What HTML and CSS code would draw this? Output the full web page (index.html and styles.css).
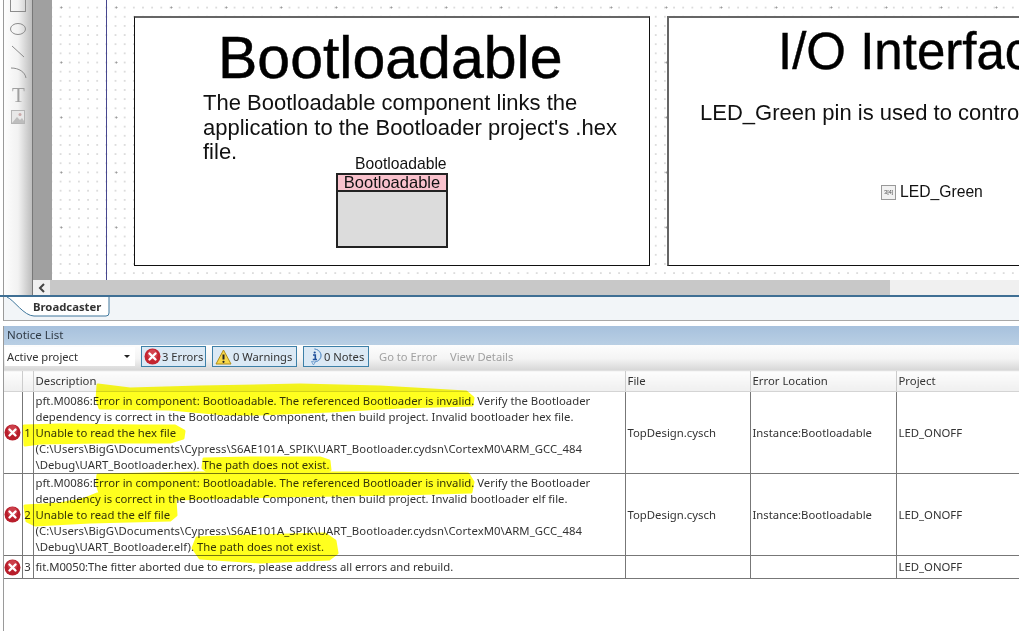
FILE: index.html
```html
<!DOCTYPE html>
<html lang="en">
<head>
<meta charset="utf-8">
<title>Notice List</title>
<link rel="stylesheet" href="styles.css">
</head>
<body>
<div class="app">
  <section class="workspace">
    <aside class="toolrail">
      <svg class="tool-icons" width="28" height="126" viewBox="0 0 28 126">
        <rect x="7.5" y="-3.5" width="15" height="15" class="tool-line"/>
        <ellipse cx="15" cy="29" rx="7.5" ry="5.5" class="tool-line"/>
        <path d="M9 46 L21 57" class="tool-line"/>
        <path d="M8 68 C16 68 22 72 23 78" class="tool-line"/>
        <rect x="8.500" y="110.500" width="13" height="13" fill="#e8e8e8" stroke="#b5b5b5"/>
        <path d="M9 123 L14 117 L17 120 L19 118 L21 121 V123 Z" fill="#bdbdbd"/>
        <circle cx="17" cy="114.500" r="1.500" fill="#c9a9a9"/>
      </svg>
      <span class="tool-text">T</span>
    </aside>
    <div class="design">
      <div class="sheet-row">
        <div class="gutter"></div>
        <div class="canvas">
          <div class="page-line"></div>
          <div class="frame frame-boot">
            <h1 class="boot-title">Bootloadable</h1>
            <p class="boot-copy">The Bootloadable component links the<br>application to the Bootloader project's .hex<br>file.</p>
            <div class="symbol-label">Bootloadable</div>
            <div class="symbol">
              <div class="symbol-head">Bootloadable</div>
            </div>
          </div>
          <div class="frame frame-io">
            <h1 class="io-title">I/O Interface</h1>
            <p class="io-copy">LED_Green pin is used to control the LED</p>
            <div class="pin"><span class="pin-box">3[4]</span><span>LED_Green</span></div>
          </div>
        </div>
      </div>
      <div class="hscroll">
        <div class="hscroll-arrow">
          <svg width="8" height="10" viewBox="0 0 8 10"><path d="M6 1 L2 5 L6 9" fill="none" stroke="#444" stroke-width="2"/></svg>
        </div>
        <div class="hscroll-thumb"></div>
      </div>
    </div>
  </section>

  <nav class="tabstrip">
    <div class="tab">
      <svg class="tab-shape" width="106" height="24" viewBox="0 0 106 24">
        <path d="M1 0 C8 3 18 19 28 19 H100 Q103 19 103 16 V0" fill="#fff" stroke="#3f779c"/>
      </svg>
      <span class="tab-label">Broadcaster</span>
    </div>
  </nav>

  <section class="notices">
    <header class="notice-title">Notice List</header>
    <div class="notice-tools">
      <div class="combo"><span>Active project</span><span class="combo-arrow"></span></div>
      <div class="tool-btn btn-errors">
        <svg class="ico" width="17" height="17" viewBox="0 0 17 17"><circle cx="8.500" cy="8.500" r="8" fill="#c4242f"/><circle cx="8.500" cy="6.500" r="5" fill="#e0606a" opacity=".55"/><path d="M5.500 5.500 L11.500 11.500 M11.500 5.500 L5.500 11.500" stroke="#fff" stroke-width="2.400" stroke-linecap="round"/></svg>
        <span>3 Errors</span>
      </div>
      <div class="tool-btn btn-warnings">
        <svg class="ico" width="17" height="16" viewBox="0 0 17 16"><path d="M8.500 1 L16 15 H1 Z" fill="#f7d84a" stroke="#b08d1a" stroke-linejoin="round"/><path d="M8.500 5.500 V10.500" stroke="#222" stroke-width="2"/><circle cx="8.500" cy="12.800" r="1.100" fill="#222"/></svg>
        <span>0 Warnings</span>
      </div>
      <div class="tool-btn btn-notes">
        <svg class="ico" width="17" height="18" viewBox="0 0 17 18"><path d="M8.500 1 A7 6.500 0 1 1 5.500 13.500 L7.500 17 L9 13.900 A7 6.500 0 0 0 8.500 1 Z" fill="#fff" stroke="#6f9fd0"/><path d="M7 7 H9.300 V11.500 M6.800 11.500 H11" fill="none" stroke="#1f4f9a" stroke-width="1.600"/><circle cx="8.700" cy="4.500" r="1.100" fill="#1f4f9a"/></svg>
        <span>0 Notes</span>
      </div>
      <span class="tool-link link-goto">Go to Error</span>
      <span class="tool-link link-view">View Details</span>
    </div>
    <table class="grid">
      <colgroup>
        <col class="col-icon"><col class="col-num"><col class="col-desc"><col class="col-file"><col class="col-loc"><col class="col-proj">
      </colgroup>
      <thead>
        <tr class="grid-head"><th></th><th></th><th>Description</th><th>File</th><th>Error Location</th><th>Project</th></tr>
      </thead>
      <tbody>
        <tr class="row-tall">
          <td class="cell-icon"><svg width="17" height="17" viewBox="0 0 17 17"><circle cx="8.500" cy="8.500" r="8" fill="#b81e2b"/><circle cx="8.500" cy="6" r="5" fill="#e0606a" opacity=".5"/><path d="M5.500 5.500 L11.500 11.500 M11.500 5.500 L5.500 11.500" stroke="#fff" stroke-width="2.400" stroke-linecap="round"/></svg></td>
          <td class="cell-num">1</td>
          <td>pft.M0086:Error in component: Bootloadable. The referenced Bootloader is invalid. Verify the Bootloader<br>dependency is correct in the Bootloadable Component, then build project. Invalid bootloader hex file.<br>Unable to read the hex file<br><span class="path-line">(C:\Users\BigG\Documents\Cypress\S6AE101A_SPIK\UART_Bootloader.cydsn\CortexM0\ARM_GCC_484</span><br>\Debug\UART_Bootloader.hex). The path does not exist.</td>
          <td>TopDesign.cysch</td>
          <td>Instance:Bootloadable</td>
          <td>LED_ONOFF</td>
        </tr>
        <tr class="row-tall">
          <td class="cell-icon"><svg width="17" height="17" viewBox="0 0 17 17"><circle cx="8.500" cy="8.500" r="8" fill="#b81e2b"/><circle cx="8.500" cy="6" r="5" fill="#e0606a" opacity=".5"/><path d="M5.500 5.500 L11.500 11.500 M11.500 5.500 L5.500 11.500" stroke="#fff" stroke-width="2.400" stroke-linecap="round"/></svg></td>
          <td class="cell-num">2</td>
          <td>pft.M0086:Error in component: Bootloadable. The referenced Bootloader is invalid. Verify the Bootloader<br>dependency is correct in the Bootloadable Component, then build project. Invalid bootloader elf file.<br>Unable to read the elf file<br><span class="path-line">(C:\Users\BigG\Documents\Cypress\S6AE101A_SPIK\UART_Bootloader.cydsn\CortexM0\ARM_GCC_484</span><br>\Debug\UART_Bootloader.elf). The path does not exist.</td>
          <td>TopDesign.cysch</td>
          <td>Instance:Bootloadable</td>
          <td>LED_ONOFF</td>
        </tr>
        <tr class="row-short">
          <td class="cell-icon"><svg width="17" height="17" viewBox="0 0 17 17"><circle cx="8.500" cy="8.500" r="8" fill="#b81e2b"/><circle cx="8.500" cy="6" r="5" fill="#e0606a" opacity=".5"/><path d="M5.500 5.500 L11.500 11.500 M11.500 5.500 L5.500 11.500" stroke="#fff" stroke-width="2.400" stroke-linecap="round"/></svg></td>
          <td class="cell-num">3</td>
          <td class="fit-line">fit.M0050:The fitter aborted due to errors, please address all errors and rebuild.</td>
          <td></td>
          <td></td>
          <td>LED_ONOFF</td>
        </tr>
      </tbody>
    </table>
  </section>

  <svg class="marker" width="1019" height="631" viewBox="0 0 1019 631">
    <path d="M98 385 L130 389 L200 387 L300 385 L380 387 L466 392 L473 398 L472 405 L400 407 L330 411 L260 414 L225 414 L170 409 L100 408 L97 400 Z"/>
    <path d="M24 426 L60 425 L140 426 L175 426 L184 431 L183 438 L170 442 L100 442 L40 443 L25 445 Z"/>
    <path d="M204 459 L250 458 L320 458 L329 461 L330 470 L320 473 L210 473 L203 468 Z"/>
    <path d="M98 475 L200 473 L350 473 L468 474 L473 482 L471 492 L400 494 L280 496 L175 499 L176 515 L170 520 L90 522 L35 525 L27 521 L25 506 L60 504 L85 499 L100 493 L97 484 Z"/>
    <path d="M197 538 L250 536 L325 534 L335 541 L337 553 L329 559 L260 562 L200 558 L193 548 Z"/>
  </svg>
</div>
</body>
</html>
```
FILE: styles.css
```css
* { box-sizing: border-box; }
html, body { margin: 0; padding: 0; background: #fff; }
.app {
  position: relative;
  width: 1019px;
  height: 631px;
  overflow: hidden;
  font-family: "Noto Sans", "Open Sans", sans-serif;
  font-size: 11px;
  color: #333;
  background: #fff;
}

/* designer area */
.workspace {
  display: flex;
  height: 297px;
  padding-left: 3px;
  background: #fff;
  border-bottom: 2px solid #3f6f94;
}
.toolrail {
  position: relative;
  width: 30px;
  flex: none;
  border-left: 1px solid #9a9a9a;
  border-right: 1px solid #777;
  background: linear-gradient(to right, #fdfdfd 0%, #f2f2f2 50%, #bdbdbd 100%);
}
.tool-icons { position: absolute; left: -1px; top: 0; }
.tool-line { fill: none; stroke: #8c8c8c; stroke-width: 1; }
.tool-text {
  position: absolute;
  left: 8px;
  top: 84px;
  font-family: "Liberation Serif", serif;
  font-size: 21px;
  line-height: 22px;
  color: #a0a0a0;
}
.design { flex: 1; min-width: 0; display: flex; flex-direction: column; }
.sheet-row { display: flex; height: 280px; }
.gutter { width: 19px; flex: none; background: #a0a0a0; }
.canvas {
  position: relative;
  flex: 1;
  overflow: hidden;
  background-color: #fff;
  background-image:
    radial-gradient(circle, #9a9a9a 0.8px, transparent 1.2px),
    radial-gradient(circle, #dcdcdc 0.7px, transparent 1px);
  background-size: 55px 55px, 9.170px 9.170px;
  background-position: -18px -20px, 4px 3px;
}
.page-line {
  position: absolute;
  left: 54px;
  top: 0;
  bottom: 0;
  width: 1px;
  background: #47478f;
}
.frame {
  position: absolute;
  top: 16px;
  height: 250px;
  background: #fff;
  border: 1px solid #111;
  border-top: 2px solid #666;
  color: #000;
  font-family: "Liberation Sans", Arial, sans-serif;
}
.frame-boot { left: 82px; width: 516px; }
.frame-io { left: 615px; width: 520px; border-left: 2px solid #666; }
.boot-title {
  position: absolute;
  left: 83px;
  top: 7px;
  margin: 0;
  font-size: 59px;
  line-height: 66px;
  font-weight: 400;
  -webkit-text-stroke: 0.5px #000;
}
.boot-copy {
  position: absolute;
  left: 68px;
  top: 73px;
  margin: 0;
  font-size: 22px;
  line-height: 24.500px;
  white-space: nowrap;
  color: #111;
}
.symbol-label {
  position: absolute;
  left: 220px;
  top: 137px;
  font-size: 15.700px;
  line-height: 18px;
  white-space: nowrap;
  color: #111;
}
.symbol {
  position: absolute;
  left: 201px;
  top: 155px;
  width: 112px;
  height: 75px;
  background: #dcdcdc;
  border: 2px solid #222;
}
.symbol-head {
  height: 17px;
  background: #f9c2cd;
  border-bottom: 2px solid #222;
  text-align: center;
  font-size: 16.500px;
  line-height: 15px;
  white-space: nowrap;
  color: #111;
}
.io-title {
  position: absolute;
  left: 109px;
  top: 6px;
  margin: 0;
  font-size: 51px;
  line-height: 56px;
  font-weight: 400;
  white-space: nowrap;
  -webkit-text-stroke: 0.4px #000;
}
.io-copy {
  position: absolute;
  left: 31px;
  top: 82px;
  margin: 0;
  font-size: 22px;
  line-height: 26px;
  white-space: nowrap;
  color: #111;
}
.pin {
  position: absolute;
  left: 212px;
  top: 165px;
  display: flex;
  align-items: center;
  gap: 4px;
  font-size: 15.700px;
  line-height: 18px;
  color: #111;
}
.pin-box {
  width: 15px;
  height: 15px;
  border: 1px solid #999;
  background: #f2f2f2;
  font-size: 6px;
  line-height: 13px;
  text-align: center;
  letter-spacing: -0.3px;
  white-space: nowrap;
  overflow: hidden;
  color: #555;
}

.hscroll {
  display: flex;
  height: 15px;
  background: #f0f0f0;
}
.hscroll-arrow {
  width: 17px;
  flex: none;
  display: flex;
  align-items: center;
  justify-content: center;
  background: #f0f0f0;
}
.hscroll-thumb { width: 840px; flex: none; background: #c8c8c8; }

/* tabs */
.tabstrip {
  height: 24px;
  margin-left: 3px;
  background: #f2f5f8;
  border-left: 1px solid #9a9a9a;
  border-bottom: 1px solid #a8a8a8;
}
.tab { position: relative; height: 100%; }
.tab-shape { position: absolute; left: 2px; top: 0; }
.tab-label {
  position: absolute;
  left: 29px;
  top: 2px;
  font-family: "Noto Sans", sans-serif;
  font-weight: 700;
  font-size: 11.300px;
  line-height: 16px;
  color: #333;
}

/* notice list */
.notices {
  margin-top: 5px;
  margin-left: 3px;
  height: 305px;
  border-left: 1px solid #9a9a9a;
}
.notice-title {
  height: 19px;
  padding-left: 3px;
  line-height: 18px;
  font-size: 11.500px;
  background: linear-gradient(to bottom, #a7c1dd, #b9cfe4);
  color: #2f3a45;
}
.notice-tools {
  position: relative;
  display: flex;
  align-items: center;
  height: 25px;
  padding-bottom: 2px;
  background: linear-gradient(to bottom, #fdfdfd 0%, #f4f4f4 55%, #d8d8d8 100%);
  font-size: 11.200px;
}
.combo {
  display: flex;
  align-items: center;
  justify-content: space-between;
  width: 130px;
  height: 19px;
  margin-left: 1px;
  padding: 0 5px 0 2px;
  background: #fff;
}
.combo-arrow {
  width: 0;
  height: 0;
  border-left: 3px solid transparent;
  border-right: 3px solid transparent;
  border-top: 3px solid #222;
}
.tool-btn {
  display: flex;
  align-items: center;
  gap: 1px;
  height: 21px;
  padding: 0 1px 0 2px;
  background: #dbe9f5;
  border: 1px solid #3d80a8;
  white-space: nowrap;
}
.btn-errors { width: 65px; margin-left: 6px; }
.btn-warnings { width: 85px; margin-left: 6px; }
.btn-notes { width: 66px; margin-left: 6px; }
.ico { flex: none; }
.tool-link { color: #a0a0a0; }
.link-goto { margin-left: 10px; width: 58px; white-space: nowrap; }
.link-view { margin-left: 13px; white-space: nowrap; }
.grid {
  table-layout: fixed;
  border-collapse: collapse;
  width: 1015px;
  font-size: 11.330px;
  line-height: 16px;
}
.col-icon { width: 18px; }
.col-num { width: 11px; }
.col-desc { width: 592px; }
.col-file { width: 125px; }
.col-loc { width: 146px; }
.col-proj { width: 123px; }
.grid-head { height: 21px; }
.grid-head th {
  padding: 0 0 0 2px;
  font-weight: 400;
  text-align: left;
  background: linear-gradient(to bottom, #fdfdfd, #efefef);
  border-left: 1px solid #ccc;
  border-bottom: 1px solid #d4d4d4;
  border-top: 1px solid #e0e0e0;
}
.grid-head th:first-child { border-left: 0; }
.grid td {
  padding: 0 0 0 2px;
  border-left: 1px solid #777;
  border-bottom: 1px solid #777;
  white-space: nowrap;
  vertical-align: middle;
}
.grid td:first-child { border-left: 0; }
.row-tall { height: 82px; }
.row-short { height: 23px; }
.grid td.cell-icon { padding: 0; text-align: center; }
.cell-icon svg { display: block; margin: 0 auto; }
.grid td.cell-num { padding: 0; text-align: center; }
.path-line { letter-spacing: 0.067px; }
.fit-line { letter-spacing: -0.06px; }

/* highlighter */
.marker {
  position: absolute;
  left: 0;
  top: 0;
  pointer-events: none;
  mix-blend-mode: multiply;
}
.marker path { fill: #ffff1e; stroke: #ffff1e; stroke-width: 3; stroke-linejoin: round; }
```
